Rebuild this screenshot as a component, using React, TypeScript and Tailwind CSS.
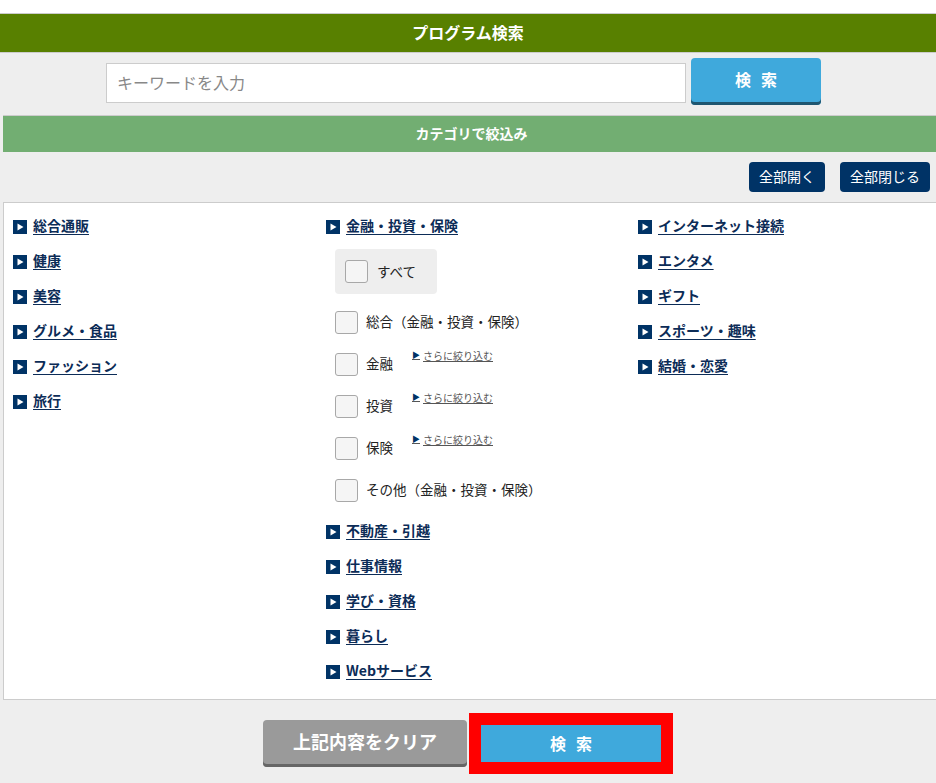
import type { ReactNode } from 'react';

const font = { fontFamily: '"Noto Sans CJK JP", "Noto Sans", sans-serif' };

function Arrow() {
  return (
    <svg width="14" height="14" viewBox="0 0 14 14" className="shrink-0">
      <rect width="14" height="14" fill="#003366" />
      <polygon points="4.5,3.5 10.5,7 4.5,10.5" fill="#fff" />
    </svg>
  );
}

function CatLink({ children }: { children: ReactNode }) {
  return (
    <div className="flex h-[35px] items-center gap-[6px]">
      <Arrow />
      <a href="#" className="pb-[4px] text-[14px] leading-[18px] font-bold text-[#0c2c57] underline underline-offset-[3px]">
        {children}
      </a>
    </div>
  );
}

function Box() {
  return <span className="block h-[23px] w-[23px] shrink-0 rounded-[3px] border border-[#a8a8a8] bg-[#f5f5f5]" />;
}

function SubRow({ label, more }: { label: string; more?: boolean }) {
  return (
    <div className="flex h-[42px] items-center pl-[9px]">
      <Box />
      <span className="ml-[8px] pb-[2px] text-[13.5px] leading-[18px] text-[#222]">{label}</span>
      {more && (
        <a href="#" className="ml-[19px] flex items-start gap-[3px] self-start pt-[7px] text-[10px] leading-[12px] text-[#555] underline">
          <span className="text-[8px] leading-[10px] text-[#003366]">▶</span>
          さらに絞り込む
        </a>
      )}
    </div>
  );
}

function SearchLabel() {
  return (
    <>
      <span>検</span>
      <span className="ml-[10px]">索</span>
    </>
  );
}

export default function App() {
  const left = ['総合通販', '健康', '美容', 'グルメ・食品', 'ファッション', '旅行'];
  const midBottom = ['不動産・引越', '仕事情報', '学び・資格', '暮らし', 'Webサービス'];
  const right = ['インターネット接続', 'エンタメ', 'ギフト', 'スポーツ・趣味', '結婚・恋愛'];

  return (
    <div className="flex min-h-screen flex-col overflow-hidden bg-white pt-[13px]" style={font}>
      <div className="flex h-[40px] items-center justify-center border-y border-[#cccccc] bg-[#588000] pb-[3px] text-[16px] font-bold text-white">
        プログラム検索
      </div>

      <div className="flex flex-1 flex-col bg-[#eeeeee] pb-[10px]">
        <div className="flex items-start justify-center gap-[5px] pt-[5px] pr-[9px]">
          <input
            placeholder="キーワードを入力"
            className="mt-[5px] h-[40px] w-[580px] border border-[#cccccc] bg-white px-[10px] pb-[3px] text-[16px] text-[#333] outline-none placeholder:text-[#888]"
          />
          <button className="h-[47px] w-[130px] rounded-[4px] bg-[#3fa9dc] pb-[5px] text-[16px] font-bold text-white shadow-[inset_0_-3px_0_#1f5670]">
            <SearchLabel />
          </button>
        </div>

        <div className="mt-[10px] ml-[3px] flex h-[37px] items-center justify-center border-t border-[#cccccc] bg-[#72ae72] pb-[2px] pl-[4px] text-[14px] font-bold text-white">
          カテゴリで絞込み
        </div>

        <div className="mt-[10px] flex justify-end gap-[15px] pr-[6px]">
          <button className="h-[30px] rounded-[4px] bg-[#003366] px-[10px] pb-[2px] text-[14px] text-white">全部開く</button>
          <button className="h-[30px] rounded-[4px] bg-[#003366] px-[10px] pb-[2px] text-[14px] text-white">全部閉じる</button>
        </div>

        <div className="mt-[10px] ml-[3px] grid grid-cols-[313px_312px_1fr] border-y border-l border-[#cccccc] bg-white pt-[6px] pb-[10px]">
          <div className="pl-[9px]">
            {left.map((t) => (
              <CatLink key={t}>{t}</CatLink>
            ))}
          </div>

          <div className="pl-[9px]">
            <CatLink>金融・投資・保険</CatLink>
            <div className="ml-[9px] mt-[5px] flex h-[45px] w-[102px] items-center gap-[9px] rounded-[4px] bg-[#eeeeee] pl-[10px]">
              <Box />
              <span className="pb-[2px] text-[13.5px] leading-[18px] text-[#222]">すべて</span>
            </div>
            <div className="mt-[7px]">
              <SubRow label="総合（金融・投資・保険）" />
              <SubRow label="金融" more />
              <SubRow label="投資" more />
              <SubRow label="保険" more />
              <SubRow label="その他（金融・投資・保険）" />
            </div>
            <div className="mt-[3px]">
              {midBottom.map((t) => (
                <CatLink key={t}>{t}</CatLink>
              ))}
            </div>
          </div>

          <div className="pl-[9px]">
            {right.map((t) => (
              <CatLink key={t}>{t}</CatLink>
            ))}
          </div>
        </div>

        <div className="mt-[13px] flex items-center justify-center gap-[2px]">
          <button className="h-[47px] w-[204px] rounded-[4px] bg-[#9a9a9a] pb-[5px] text-[18px] font-bold text-white shadow-[inset_0_-3px_0_#666666]">
            上記内容をクリア
          </button>
          <div className="border-[12px] border-[#ff0000]">
            <button className="h-[37px] w-[180px] bg-[#3fa9dc] pb-[2px] text-[16px] font-bold text-white">
              <SearchLabel />
            </button>
          </div>
        </div>
      </div>
    </div>
  );
}
